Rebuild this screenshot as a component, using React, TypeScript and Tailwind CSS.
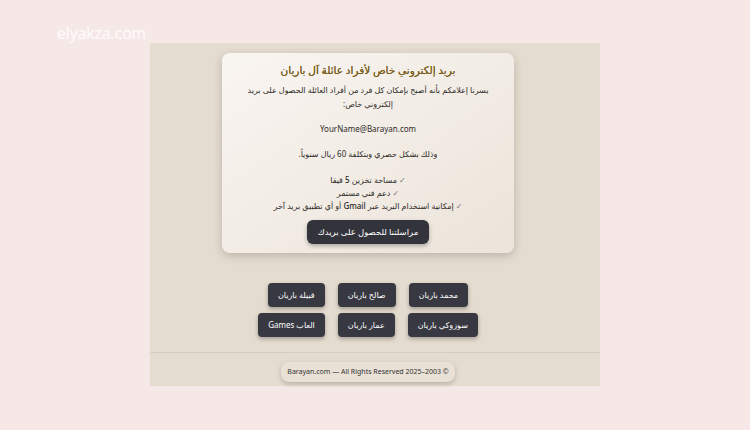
import React from 'react';

const family = { fontFamily: '"Noto Sans", "DejaVu Sans", sans-serif' };

const links = [
    'محمد باريان',
    'صالح باريان',
    'قبيلة باريان',
    'سوزوكي باريان',
    'عمار باريان',
    'العاب Games',
];

export default function App() {
    return (
        <div className="relative h-[430px] w-[750px] overflow-hidden bg-[#f7e8e8]" style={family}>
            {/* watermark */}
            <div className="absolute left-[57px] top-[22px] text-[15.5px] text-white/80">elyakza.com</div>

            <div className="absolute left-[150px] top-[43px] flex h-[343px] w-[450px] flex-col bg-[#e5dcd0] pr-[14px]" dir="rtl">
                <div className="mx-auto mt-[10px] w-[292px] rounded-lg bg-gradient-to-br from-[#f9f5f1] to-[#ebe4da] px-[20px] pb-[9px] pt-[9px] text-center text-[#2e2b28] shadow-[0_3px_10px_rgba(0,0,0,0.18)]">
                    <h1 className="text-[10.5px] font-normal leading-[17px] text-[#7a5f1e] [text-shadow:0_0_0.4px_#7a5f1e]">بريد إلكتروني خاص لأفراد عائلة آل باريان</h1>
                    <p className="mt-[4px] text-[8px] leading-[14px]">
                        يسرنا إعلامكم بأنه أصبح بإمكان كل فرد من أفراد العائلة الحصول على بريد إلكتروني خاص:
                    </p>
                    <p className="mt-[11px] text-[8px] leading-[14px]" dir="ltr">YourName@Barayan.com</p>
                    <p className="mt-[11px] text-[8px] leading-[14px]">وذلك بشكل حصري وبتكلفة 60 ريال سنوياً.</p>
                    <div className="mt-[12px] text-[8px] font-medium leading-[13px]">
                        <div><span className="text-[#777]">✓</span> مساحة تخزين 5 قيقا</div>
                        <div><span className="text-[#777]">✓</span> دعم فني مستمر</div>
                        <div><span className="text-[#777]">✓</span> إمكانية استخدام البريد عبر Gmail أو أي تطبيق بريد آخر</div>
                    </div>
                    <button className="mt-[8px] h-[24px] rounded-md bg-[#33333c] px-[11px] text-[8.5px] text-white shadow-[0_2px_4px_rgba(0,0,0,0.3)]">
                        مراسلتنا للحصول على بريدك
                    </button>
                </div>

                <div className="mx-auto mt-[30px] flex w-[240px] flex-wrap justify-center gap-x-[13px] gap-y-[6px]">
                    {links.map((name) => (
                        <button
                            key={name}
                            className="h-[24px] rounded-[4px] bg-[#383842] px-[10px] text-[8px] text-white shadow-[0_2px_4px_rgba(0,0,0,0.3)]"
                        >
                            {name}
                        </button>
                    ))}
                </div>

                <div className="mt-[15px] -mr-[14px] border-t border-[#d6ccbf]" />

                <div className="mx-auto mt-[9px] flex h-[20px] w-[174px] items-center justify-center rounded-lg bg-[#e9e1d6] text-[7px] text-[#333] shadow-[0_2px_5px_rgba(0,0,0,0.2)]" dir="ltr">
                    Barayan.com — All Rights Reserved 2025–2003 ©
                </div>
            </div>
        </div>
    );
}
